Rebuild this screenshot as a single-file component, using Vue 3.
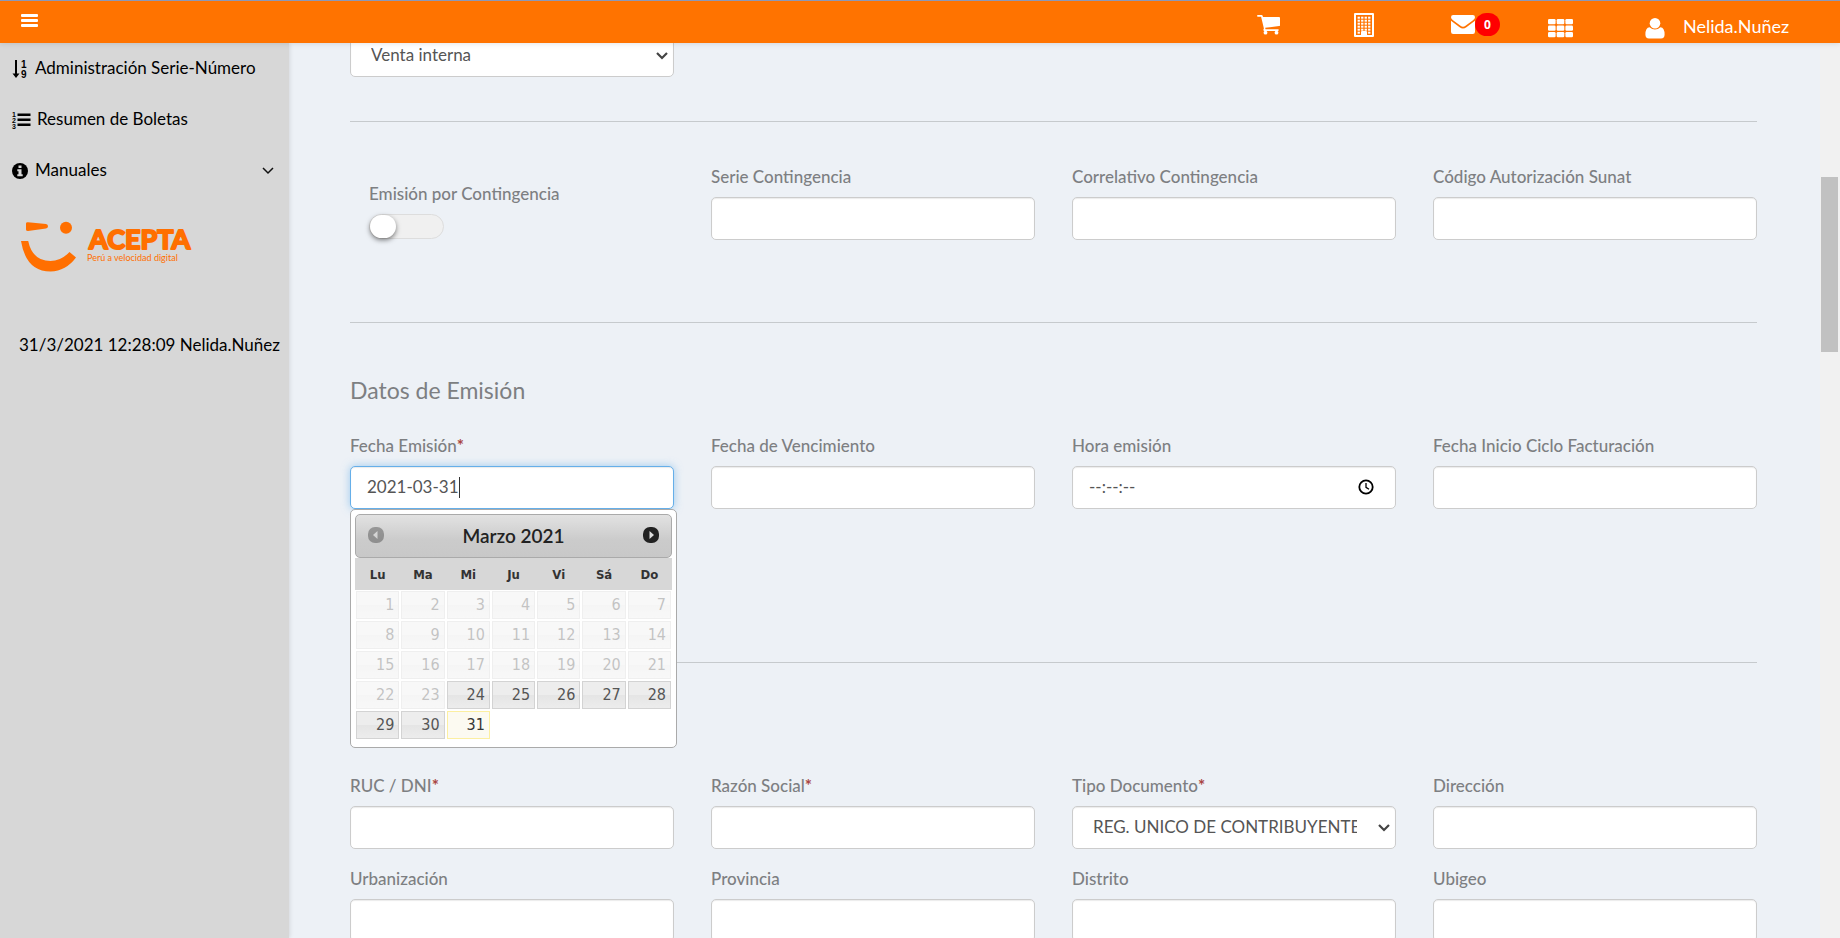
<script setup>
import { onMounted, ref } from 'vue'

const dateInput = ref(null)
const issueDate = ref('2021-03-31')
const contingency = ref(false)

const contingencyFields = [
  { id: 'serie', label: 'Serie Contingencia' },
  { id: 'correlativo', label: 'Correlativo Contingencia' },
  { id: 'autorizacion', label: 'Código Autorización Sunat' },
]
const addressFields = [
  { id: 'urbanizacion', label: 'Urbanización' },
  { id: 'provincia', label: 'Provincia' },
  { id: 'distrito', label: 'Distrito' },
  { id: 'ubigeo', label: 'Ubigeo' },
]

const dayNames = ['Lu', 'Ma', 'Mi', 'Ju', 'Vi', 'Sá', 'Do']
const weeks = [0, 1, 2, 3, 4].map((w) =>
  [1, 2, 3, 4, 5, 6, 7].map((d) => w * 7 + d).map((d) => (d <= 31 ? d : null)),
)
const firstEnabled = 24
const today = 31

onMounted(() => {
  const el = dateInput.value
  el.focus({ preventScroll: true })
  el.setSelectionRange(el.value.length, el.value.length)
})
</script>

<template>
  <div class="app">
    <header class="topbar">
      <button class="menu-btn" type="button" aria-label="Menú">
        <svg width="17" height="14" viewBox="0 0 17 14" fill="#fff">
          <rect width="17" height="3" rx="1" />
          <rect y="5" width="17" height="3" rx="1" />
          <rect y="10" width="17" height="3" rx="1" />
        </svg>
      </button>
      <nav class="tools" aria-label="Accesos">
        <a href="#" class="tool" aria-label="Carrito">
          <svg width="23" height="20" viewBox="0 0 23 20" fill="#fff">
            <path d="M1 0h3.600q.9 0 1.100.9L6 2h16q1 0 1 1v7.200q0 .8-.9.9L8.200 12.700l.3 1.600H21q.8 0 .8.8t-.8.8H7.200q-.9 0-.9-.8l.6-1.600L4.100 1.700H1Q0 1.700 0 .9T1 0z" />
            <circle cx="8.500" cy="17.700" r="1.900" />
            <circle cx="19.500" cy="17.700" r="1.900" />
          </svg>
        </a>
        <a href="#" class="tool" aria-label="Empresa">
          <svg width="20" height="24" viewBox="0 0 20 24">
            <path fill="#fff" fill-rule="evenodd" d="M1 0h18q1 0 1 1v22q0 1-1 1H1q-1 0-1-1V1q0-1 1-1zM2 2v20h5v-3q0-1 1-1h4q1 0 1 1v3h5V2z" />
            <g fill="#fff">
              <template v-for="r in 5" :key="r">
                <rect v-for="c in 4" :key="c" :x="c * 3.5 + 0.1" :y="r * 3 + 0.7" width="2.300" height="2" />
              </template>
              <rect x="3.600" y="18.700" width="2.300" height="2" />
              <rect x="14.100" y="18.700" width="2.300" height="2" />
            </g>
          </svg>
        </a>
        <a href="#" class="tool" aria-label="Mensajes">
          <svg width="24" height="19" viewBox="0 0 24 19" fill="#fff">
            <path d="M0 2.200Q0 0 2.200 0h19.600Q24 0 24 2.200q0 1.500-2 3.100l-7.500 5.400q-2.500 2-5 0L2 5.300Q0 3.700 0 2.200z" />
            <path d="M0 5.700l8.600 6.500q3.400 2.400 6.800 0L24 5.700v11q0 2.300-2.200 2.300H2.200Q0 19 0 16.700z" />
          </svg>
          <span class="badge">0</span>
        </a>
        <a href="#" class="tool low" aria-label="Aplicaciones">
          <svg width="25" height="18" viewBox="0 0 25 18" fill="#fff">
            <template v-for="r in 3" :key="r">
              <rect v-for="c in 3" :key="c" :x="(c - 1) * 8.7" :y="(r - 1) * 6.5" width="7.600" height="5.200" rx="1.200" />
            </template>
          </svg>
        </a>
        <a href="#" class="tool low user">
          <svg width="20" height="21" viewBox="0 0 20 21" fill="#fff">
            <circle cx="10" cy="5.300" r="5.300" />
            <path d="M4.600 9.200Q7 11.600 10 11.600t5.400-2.400Q19.600 9.600 19.600 16.500q0 4-3.600 4H4q-3.600 0-3.600-4 0-6.900 4.200-7.300z" />
          </svg>
          <span>Nelida.Nuñez</span>
        </a>
      </nav>
    </header>

    <div class="body">
      <aside class="sidebar">
        <nav class="side-nav" aria-label="Principal">
          <a href="#">
            <svg width="17" height="20" viewBox="0 0 17 20">
              <path d="M3 1h2v13.500h2.500L4 19 .5 14.500H3z" />
              <text x="9" y="9" class="num">1</text>
              <text x="9" y="19" class="num">9</text>
            </svg>
            <span>Administración Serie-Número</span>
          </a>
          <a href="#">
            <svg width="19" height="18" viewBox="0 0 19 18">
              <path d="M5.500 2.500h13v2.500h-13zM5.500 7.500h13v2.500h-13zM5.500 12.500h13V15h-13z" />
              <text x="0" y="6" class="tiny">1</text>
              <text x="0" y="12" class="tiny">2</text>
              <text x="0" y="18" class="tiny">3</text>
            </svg>
            <span>Resumen de Boletas</span>
          </a>
          <a href="#">
            <svg width="17" height="16" viewBox="0 0 17 16">
              <circle cx="8" cy="8" r="8" />
              <path fill="#d7d7d7" d="M6.500 2.500h3v2.400h-3zM5.300 6.200h4.200v5h1.200v2H5.300v-2h1.200v-3H5.300z" />
            </svg>
            <span>Manuales</span>
            <svg class="chev" width="12" height="8" viewBox="0 0 12 8" fill="none" stroke="#111" stroke-width="1.500">
              <path d="M1 1l5 5 5-5" />
            </svg>
          </a>
        </nav>
        <svg class="logo" width="176" height="54" viewBox="0 0 176 54" fill="#ff6f00" role="img" aria-label="Acepta">
          <path d="M6 3.500Q6 2 8 2.200L26 4q2 .3 2 2.300t-2 2.200L8 11q-2 0-2-1.600z" />
          <circle cx="46" cy="7.800" r="6" />
          <path d="M1 21h7.200q4.300 20 22.300 20Q41 41 49.500 32l6.500 5.500Q46 51 30.500 51.500 6 51.500 1 21z" />
          <text x="69" y="29" class="brand">ACEPTA</text>
          <text x="67" y="41" class="tagline">Perú a velocidad digital</text>
        </svg>
        <p class="session">31/3/2021 12:28:09 Nelida.Nuñez</p>
      </aside>

      <main class="content">
        <form class="form" @submit.prevent>
          <div class="row">
            <div class="select-box">
              <select aria-label="Tipo de venta"><option>Venta interna</option></select>
              <svg width="12" height="8" viewBox="0 0 12 8" fill="none" stroke="#444" stroke-width="2.200"><path d="M1 1l5 5 5-5" /></svg>
            </div>
          </div>
          <hr class="rule-a" />

          <div class="row">
            <div class="switch-field">
              <label for="contingencia">Emisión por Contingencia</label>
              <input id="contingencia" v-model="contingency" class="switch" type="checkbox" role="switch" />
            </div>
            <div v-for="f in contingencyFields" :key="f.id" class="field">
              <label :for="f.id">{{ f.label }}</label>
              <input :id="f.id" class="control" type="text" />
            </div>
          </div>
          <hr class="rule-b" />

          <h2>Datos de Emisión</h2>
          <div class="row">
            <div class="field anchor">
              <label for="emision">Fecha Emisión<b>*</b></label>
              <input id="emision" ref="dateInput" v-model="issueDate" class="control active" type="text" autocomplete="off" />
              <i class="caret" aria-hidden="true"></i>
              <div class="picker">
                <div class="picker-head">
                  <button type="button" class="prev" aria-label="Anterior" disabled>
                    <svg width="16" height="16" viewBox="0 0 16 16"><rect width="16" height="16" rx="7" fill="#222" /><path d="M9.500 4v8L5 8z" fill="#ddd" /></svg>
                  </button>
                  <span>Marzo 2021</span>
                  <button type="button" aria-label="Siguiente">
                    <svg width="16" height="16" viewBox="0 0 16 16"><rect width="16" height="16" rx="7" fill="#222" /><path d="M6.500 4v8L11 8z" fill="#ddd" /></svg>
                  </button>
                </div>
                <table>
                  <thead>
                    <tr><th v-for="d in dayNames" :key="d" scope="col">{{ d }}</th></tr>
                  </thead>
                  <tbody>
                    <tr v-for="(week, i) in weeks" :key="i">
                      <td v-for="(d, j) in week" :key="j">
                        <button v-if="d" type="button" class="day" :class="{ today: d === today }" :disabled="d < firstEnabled">{{ d }}</button>
                      </td>
                    </tr>
                  </tbody>
                </table>
              </div>
            </div>
            <div class="field">
              <label for="vencimiento">Fecha de Vencimiento</label>
              <input id="vencimiento" class="control" type="text" />
            </div>
            <div class="field">
              <label for="hora">Hora emisión</label>
              <div class="time-box">
                <input id="hora" class="control" type="text" placeholder="--:--:--" />
                <button type="button" aria-label="Elegir hora">
                  <svg width="16" height="16" viewBox="0 0 16 16" fill="none" stroke="#000"><circle cx="8" cy="8" r="6.700" stroke-width="1.800" /><path d="M8 4v4.300l3 2" stroke-width="1.300" /></svg>
                </button>
              </div>
            </div>
            <div class="field">
              <label for="ciclo">Fecha Inicio Ciclo Facturación</label>
              <input id="ciclo" class="control" type="text" />
            </div>
          </div>
          <hr class="rule-c" />

          <div class="row">
            <div class="field">
              <label for="ruc">RUC / DNI<b>*</b></label>
              <input id="ruc" class="control" type="text" />
            </div>
            <div class="field">
              <label for="razon">Razón Social<b>*</b></label>
              <input id="razon" class="control" type="text" />
            </div>
            <div class="field">
              <label for="tipo">Tipo Documento<b>*</b></label>
              <div class="select-box">
                <select id="tipo"><option>REG. UNICO DE CONTRIBUYENTES</option></select>
                <svg width="12" height="8" viewBox="0 0 12 8" fill="none" stroke="#444" stroke-width="2.200"><path d="M1 1l5 5 5-5" /></svg>
              </div>
            </div>
            <div class="field">
              <label for="direccion">Dirección</label>
              <input id="direccion" class="control" type="text" />
            </div>
          </div>
          <div class="row row-next">
            <div v-for="f in addressFields" :key="f.id" class="field">
              <label :for="f.id">{{ f.label }}</label>
              <input :id="f.id" class="control" type="text" />
            </div>
          </div>
        </form>
      </main>
      <div class="scroll-track" aria-hidden="true"><div class="scroll-thumb"></div></div>
    </div>
  </div>
</template>

<style>
body {
  margin: 0;
  overflow: hidden;
}
</style>

<style scoped>
* {
  box-sizing: border-box;
}
.app {
  display: flex;
  flex-direction: column;
  height: 100vh;
  overflow: hidden;
  font-family: Lato, "Open Sans", sans-serif;
  font-size: 17px;
  color: #000;
  background: #edf1f6;
}
button {
  padding: 0;
  border: 0;
  background: none;
  font: inherit;
  cursor: pointer;
}
svg {
  display: block;
  flex: none;
  overflow: visible;
}
a {
  color: inherit;
  text-decoration: none;
}
.topbar {
  position: relative;
  z-index: 2;
  flex: none;
  display: flex;
  justify-content: space-between;
  height: 43px;
  border-top: 1px solid #8c98b8;
  background: #ff7300;
  box-shadow: 0 1px 5px rgba(0, 0, 0, 0.1);
}
.menu-btn {
  align-self: flex-start;
  padding: 13px 21px;
}
.tools {
  display: flex;
}
.tool {
  display: flex;
  align-items: center;
  width: 97px;
  padding-top: 5px;
  color: #fff;
}
.tool.low {
  padding-top: 12px;
}
.tool.user {
  gap: 18px;
  width: 195px;
  font-size: 18px;
  line-height: 20px;
}
.tool.user span {
  padding-bottom: 5px;
}
.badge {
  padding: 0 9px;
  border-radius: 12px;
  background: #f00;
  font: bold 12px/23px "Open Sans", sans-serif;
}
.body {
  flex: 1;
  display: flex;
  min-height: 0;
}
.sidebar {
  flex: none;
  width: 289px;
  background: #d7d7d7;
  box-shadow: 1px 0 4px rgba(0, 0, 0, 0.1);
}
.side-nav a {
  display: flex;
  align-items: center;
  gap: 6px;
  height: 51px;
  padding: 0 15px 0 12px;
}
.side-nav span {
  padding-bottom: 2px;
}
.chev {
  margin-left: auto;
}
.num {
  font: bold 10px "Liberation Sans", sans-serif;
}
.tiny {
  font: bold 7px "Liberation Sans", sans-serif;
}
.logo {
  margin: 24px 0 0 20px;
}
.brand {
  font: bold 27px Lato, sans-serif;
  stroke: #ff6f00;
  stroke-width: 2px;
  stroke-linejoin: round;
}
.tagline {
  font: 9px Lato, sans-serif;
}
.session {
  margin: 59px 0 0 19px;
  font-size: 17px;
  line-height: 24px;
  white-space: nowrap;
}
.content {
  flex: 1;
  min-width: 0;
  overflow: hidden;
  padding: 0 63px 0 61px;
}
.form {
  margin-top: -9px;
}
.row {
  display: grid;
  grid-template-columns: repeat(4, minmax(0, 1fr));
  gap: 37px;
}
.row-next {
  margin-top: 19px;
}
hr {
  height: 1px;
  margin: 0;
  border: 0;
  background: #c6cacd;
}
.rule-a {
  margin: 44px 0;
}
.rule-b {
  margin: 82px 0 53px;
}
.rule-c {
  margin: 153px 0 112px;
}
label {
  display: block;
  margin-bottom: 9px;
  font-size: 17px;
  font-weight: 500;
  line-height: 22px;
  color: #7d7f82;
}
label b {
  color: #a94442;
}
h2 {
  margin: 0 0 31px;
  font-size: 23px;
  font-weight: 400;
  line-height: 28px;
  color: #7d7f82;
}
.control,
select {
  display: block;
  width: 100%;
  height: 43px;
  padding: 0 16px 2px;
  border: 1px solid #ccc;
  border-radius: 5px;
  outline: none;
  background: #fff;
  box-shadow: inset 0 1px 1px rgba(0, 0, 0, 0.08);
  font: 17px Lato, sans-serif;
  color: #555;
}
.control::placeholder {
  color: #555;
  opacity: 1;
}
.control.active {
  border-color: #66afe9;
  box-shadow: inset 0 1px 1px rgba(0, 0, 0, 0.08), 0 0 8px rgba(102, 175, 233, 0.6);
  caret-color: transparent;
}
.caret {
  position: absolute;
  left: 109px;
  bottom: 11px;
  width: 1px;
  height: 21px;
  background: #333;
}
.select-box,
.time-box {
  position: relative;
}
select {
  appearance: none;
  padding: 0 38px 2px 20px;
}
.select-box svg {
  position: absolute;
  right: 6px;
  top: 18px;
  pointer-events: none;
}
.time-box button {
  position: absolute;
  right: 22px;
  top: 13px;
}
.switch-field {
  padding: 17px 0 0 19px;
}
.switch {
  appearance: none;
  display: block;
  width: 75px;
  height: 25px;
  margin: 0;
  border: 1px solid #ddd;
  border-radius: 13px;
  background: #f0f0f0;
}
.switch::before {
  content: "";
  display: block;
  width: 26px;
  height: 23px;
  border-radius: 12px;
  background: #fff;
  box-shadow: 0 2px 5px rgba(0, 0, 0, 0.5);
}
.switch:checked::before {
  margin-left: auto;
}
.anchor {
  position: relative;
}
.picker {
  position: absolute;
  z-index: 1;
  top: 100%;
  left: 0;
  width: 327px;
  padding: 4px 4px 7px;
  border: 1px solid #aaa;
  border-radius: 5px;
  background: #fff;
}
.picker-head {
  display: flex;
  align-items: center;
  justify-content: space-between;
  height: 44px;
  padding: 0 12px 2px;
  border: 1px solid #aaa;
  border-radius: 5px;
  background: linear-gradient(#e2e2e2, #cbcbcb 60%, #c8c8c8);
  font-size: 19px;
  font-weight: 600;
  color: #222;
}
.prev {
  opacity: 0.35;
}
table {
  width: 100%;
  border-collapse: collapse;
  table-layout: fixed;
  font-family: "DejaVu Sans Condensed", "DejaVu Sans", sans-serif;
}
thead {
  background: #d7d7d7;
}
th {
  height: 32px;
  padding: 0;
  font-size: 13px;
  color: #333;
}
td {
  height: 30px;
  padding: 1px;
}
.day {
  display: block;
  width: 100%;
  height: 28px;
  padding: 0 4px;
  border: 1px solid #d3d3d3;
  background: linear-gradient(#ededed 50%, #e5e5e5 50%, #ececec);
  font-size: 16px;
  line-height: 26px;
  text-align: right;
  color: #555;
}
.day:disabled {
  opacity: 0.35;
}
.day.today {
  border-color: #fcefa1;
  background: #fcfaf1;
  color: #363636;
}
.scroll-track {
  flex: none;
  width: 20px;
  padding: 134px 2px 0 1px;
  background: #f1f1f1;
}
.scroll-thumb {
  height: 175px;
  background: #c1c1c1;
}
</style>
